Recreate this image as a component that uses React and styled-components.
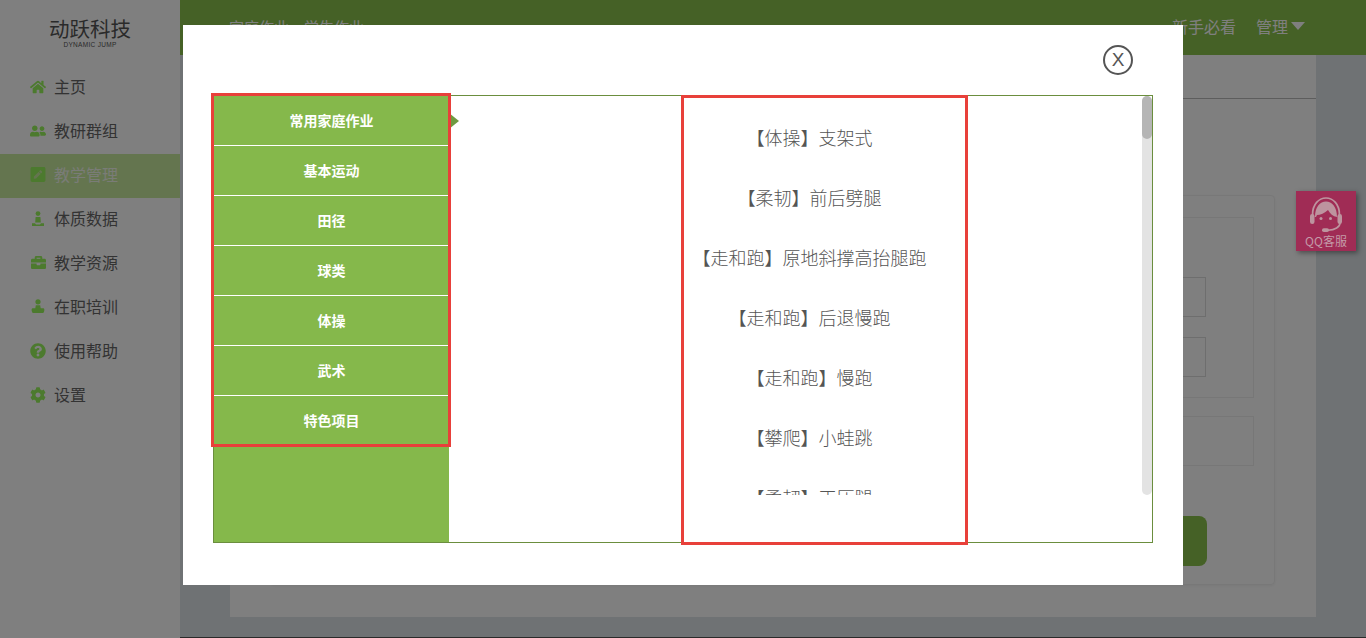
import React from "react";
import styled, { createGlobalStyle } from "styled-components";
import { FaHome, FaUserFriends, FaPenSquare, FaBriefcase, FaQuestionCircle, FaCog } from "react-icons/fa";

const CATEGORIES = ["常用家庭作业", "基本运动", "田径", "球类", "体操", "武术", "特色项目"];
const EXERCISES = [
    "【体操】支架式",
    "【柔韧】前后劈腿",
    "【走和跑】原地斜撑高抬腿跑",
    "【走和跑】后退慢跑",
    "【走和跑】慢跑",
    "【攀爬】小蛙跳",
    "【柔韧】正压腿",
];

function PodiumIcon () {
    return (
        <svg width="16" height="16" viewBox="0 0 16 16" fill="currentColor">
            <circle cx="8" cy="2.6" r="2.4" />
            <path d="M5.6 6h4.8l.4 5.4H5.2z" />
            <path d="M2 12.2h3l1 1.2h4l1-1.2h3V15H2z" />
        </svg>
    );
}

function TraineeIcon () {
    return (
        <svg width="16" height="16" viewBox="0 0 16 16" fill="currentColor">
            <circle cx="8" cy="2.8" r="2.6" />
            <path d="M5.8 6.2h4.4l.5 3h2.8c.8 0 1.2 1.6.6 3.2-.3.9-.9 1.6-1.7 1.6H3.6c-.8 0-1.4-.7-1.7-1.6-.6-1.6-.2-3.2.6-3.2h2.8z" />
        </svg>
    );
}

function HeadsetIcon () {
    return (
        <svg width="32" height="35" viewBox="0 0 32 35" fill="none">
            <path d="M2.5 18C2.5 7 9 1 16 1s13.5 6 13.5 17" stroke="#bd949f" strokeWidth="1.7" />
            <path d="M5 20C5 10 10 4.500 16 4.500S27 10 27 20c-4-.5-7-3.500-9-7-3 3-8 5-11 5l-1 2z" fill="#bd949f" />
            <rect x="0" y="17" width="4.500" height="10" rx="2.200" fill="#bd949f" />
            <rect x="27.500" y="17" width="4.500" height="10" rx="2.200" fill="#bd949f" />
            <circle cx="11" cy="21.500" r="1.500" fill="#bd949f" />
            <circle cx="20.500" cy="21.500" r="1.500" fill="#bd949f" />
            <path d="M30 26c0 4-5 7-12 7.300" stroke="#bd949f" strokeWidth="1.600" />
            <rect x="12" y="31.300" width="7" height="3.700" rx="1.800" fill="#bd949f" />
        </svg>
    );
}

const NAV_ITEMS = [
    { label: "主页", icon: <FaHome size={16} /> },
    { label: "教研群组", icon: <FaUserFriends size={16} /> },
    { label: "教学管理", icon: <FaPenSquare size={17} />, active: true },
    { label: "体质数据", icon: <PodiumIcon /> },
    { label: "教学资源", icon: <FaBriefcase size={15} /> },
    { label: "在职培训", icon: <TraineeIcon /> },
    { label: "使用帮助", icon: <FaQuestionCircle size={16} /> },
    { label: "设置", icon: <FaCog size={16} /> },
];

function App () {
    return (
        <Page>
            <GlobalStyle />
            <Sidebar>
                <Logo>
                    <LogoName>{"动跃科技"}</LogoName>
                    <LogoSub>{"DYNAMIC JUMP"}</LogoSub>
                </Logo>
                {NAV_ITEMS.map(item => (
                    <NavItem key={item.label} $active={item.active}>
                        <NavIcon>{item.icon}</NavIcon>
                        <NavLabel>{item.label}</NavLabel>
                    </NavItem>
                ))}
            </Sidebar>
            <Main>
                <TopBar>
                    <Crumb>{"家庭作业、学生作业"}</Crumb>
                    <TopLinks>
                        <span>{"新手必看"}</span>
                        <Manage>{"管理"}<Caret /></Manage>
                    </TopLinks>
                </TopBar>
                <Content>
                    <Panel>
                        <TabRow />
                        <Card>
                            <FieldBox>
                                <InputBox />
                                <InputBox />
                            </FieldBox>
                            <PlainBox />
                            <SubmitButton />
                        </Card>
                    </Panel>
                </Content>
                <BottomStrip />
            </Main>
            <Overlay>
                <Modal>
                    <ModalHead>
                        <CloseButton>{"X"}</CloseButton>
                    </ModalHead>
                    <Frame>
                        <Categories>
                            {CATEGORIES.map((name, i) => (
                                <CategoryRow key={name}>
                                    {name}
                                    {i === 0 && <ActiveArrow />}
                                </CategoryRow>
                            ))}
                        </Categories>
                        <ListPane>
                            <ExerciseList>
                                {EXERCISES.map(name => <Exercise key={name}>{name}</Exercise>)}
                            </ExerciseList>
                            <ScrollTrack><ScrollThumb /></ScrollTrack>
                        </ListPane>
                        <LeftMark />
                        <RightMark />
                    </Frame>
                </Modal>
            </Overlay>
            <QQButton>
                <HeadsetIcon />
                <QQLabel>{"QQ客服"}</QQLabel>
            </QQButton>
        </Page>
    );
}

const GlobalStyle = createGlobalStyle`
    html, body {
        margin: 0;
        padding: 0;
    }
    body {
        font-family: "Noto Sans CJK SC", "Liberation Sans", sans-serif;
    }
`;

const Page = styled.div`
    position: relative;
    display: flex;
    width: 1366px;
    height: 638px;
    overflow: hidden;
    background: #fff;
`;

const Sidebar = styled.div`
    width: 180px;
    flex-shrink: 0;
    background: #fff;
`;

const Logo = styled.div`
    height: 66px;
    display: flex;
    flex-direction: column;
    align-items: center;
    padding-top: 15px;
    box-sizing: border-box;
    color: #555;
`;

const LogoName = styled.div`
    font-size: 20.5px;
    line-height: 26px;
`;

const LogoSub = styled.div`
    font-family: "Liberation Sans", sans-serif;
    font-size: 6.5px;
    line-height: 7px;
    letter-spacing: 0.3px;
`;

const NavItem = styled.div`
    display: flex;
    align-items: center;
    height: 44px;
    padding-left: 30px;
    font-size: 16px;
    color: ${props => (props.$active ? "#f4f8ee" : "#666")};
    background: ${props => (props.$active ? "#c8ea9f" : "transparent")};
`;

const NavLabel = styled.span`
    padding-bottom: 5px;
`;

const NavIcon = styled.span`
    display: flex;
    justify-content: center;
    align-items: center;
    width: 16px;
    margin: -3px 8px 0 0;
    color: #98f45c;
`;

const Main = styled.div`
    flex: 1;
    display: flex;
    flex-direction: column;
    background: #dfe4e8;
`;

const TopBar = styled.div`
    height: 55px;
    flex-shrink: 0;
    box-sizing: border-box;
    display: flex;
    justify-content: space-between;
    align-items: center;
    padding: 0 61px 3px 49px;
    background: #8ac24c;
    color: #fff;
    font-size: 16px;
`;

const Crumb = styled.div`
    font-size: 15px;
`;

const TopLinks = styled.div`
    display: flex;
    gap: 20px;
`;

const Manage = styled.span`
    display: flex;
    align-items: center;
`;

const Caret = styled.i`
    width: 0;
    height: 0;
    margin: 0 0 0 3px;
    border-left: 7px solid transparent;
    border-right: 7px solid transparent;
    border-top: 8px solid #fff;
`;

const Content = styled.div`
    flex: 1;
    padding: 0 50px;
    min-height: 0;
`;

const Panel = styled.div`
    height: 562px;
    background: #fff;
`;

const TabRow = styled.div`
    height: 44px;
    box-sizing: border-box;
    border-bottom: 1px solid #bbb;
`;

const Card = styled.div`
    box-sizing: border-box;
    height: 390px;
    margin: 96px 41px 0 40px;
    padding: 21px 20px 0;
    border: 1px solid #f0f0f0;
    border-radius: 4px;
    display: flex;
    flex-direction: column;
    align-items: flex-end;
    box-shadow: 0 1px 3px rgba(0, 0, 0, 0.06);
`;

const FieldBox = styled.div`
    box-sizing: border-box;
    width: 100%;
    height: 181px;
    padding: 59px 47px 0 0;
    border: 1px solid #eee;
    display: flex;
    flex-direction: column;
    align-items: flex-end;
    gap: 20px;
`;

const InputBox = styled.div`
    box-sizing: border-box;
    width: 600px;
    height: 40px;
    border: 1px solid #ddd;
`;

const PlainBox = styled.div`
    box-sizing: border-box;
    width: 100%;
    height: 50px;
    margin-top: 18px;
    border: 1px solid #eee;
`;

const SubmitButton = styled.div`
    width: 190px;
    height: 50px;
    margin: 50px 47px 0 0;
    border-radius: 8px;
    background: #8ac24c;
`;

const BottomStrip = styled.div`
    height: 1px;
    flex-shrink: 0;
    background: #555;
`;

const QQButton = styled.div`
    position: absolute;
    left: 1296px;
    top: 191px;
    width: 60px;
    height: 60px;
    display: flex;
    flex-direction: column;
    align-items: center;
    padding-top: 6px;
    box-sizing: border-box;
    background: #a02c55;
    box-shadow: 2px 2px 5px rgba(0, 0, 0, 0.4);
`;

const QQLabel = styled.span`
    color: #c49aa8;
    font-size: 12px;
    line-height: 13px;
    margin-top: 2px;
`;

const Overlay = styled.div`
    position: absolute;
    inset: 0;
    display: flex;
    justify-content: center;
    align-items: flex-start;
    padding-top: 25px;
    background: rgba(0, 0, 0, 0.5);
`;

const Modal = styled.div`
    width: 1000px;
    height: 560px;
    padding: 0 30px;
    box-sizing: border-box;
    background: #fff;
`;

const ModalHead = styled.div`
    height: 70px;
    display: flex;
    justify-content: flex-end;
    align-items: center;
    padding: 0 20px 0 0;
`;

const CloseButton = styled.div`
    box-sizing: border-box;
    width: 30px;
    height: 30px;
    border: 2px solid #555;
    border-radius: 50%;
    display: flex;
    justify-content: center;
    align-items: center;
    font-family: "Liberation Sans", sans-serif;
    font-size: 19px;
    color: #555;
`;

const Frame = styled.div`
    position: relative;
    box-sizing: border-box;
    width: 940px;
    height: 448px;
    display: flex;
    border: 1px solid #6b8e3e;
`;

const Categories = styled.div`
    width: 235px;
    flex-shrink: 0;
    background: #85b84b;
`;

const CategoryRow = styled.div`
    position: relative;
    box-sizing: border-box;
    height: 50px;
    padding-bottom: 2px;
    display: flex;
    justify-content: center;
    align-items: center;
    border-bottom: 1px solid #fff;
    color: #fff;
    font-size: 14px;
    font-weight: 700;
`;

const ActiveArrow = styled.i`
    position: absolute;
    left: 100%;
    top: 17px;
    width: 0;
    height: 0;
    border-top: 8px solid transparent;
    border-bottom: 8px solid transparent;
    border-left: 10px solid #6f9a40;
`;

const ListPane = styled.div`
    flex: 1;
    display: flex;
    align-items: flex-start;
`;

const ExerciseList = styled.ul`
    flex: 1;
    height: 399px;
    margin: 0;
    padding: 11px 0 0 28px;
    box-sizing: border-box;
    overflow: hidden;
    list-style: none;
`;

const Exercise = styled.li`
    height: 60px;
    line-height: 60px;
    text-align: center;
    font-size: 18px;
    font-weight: 300;
    color: #555;
`;

const ScrollTrack = styled.div`
    width: 10px;
    height: 399px;
    border-radius: 5px;
    background: #e3e3e3;
`;

const ScrollThumb = styled.div`
    height: 43px;
    border-radius: 5px;
    background: #b5b5b5;
`;

const LeftMark = styled.div`
    position: absolute;
    left: -3px;
    top: -3px;
    width: 240px;
    height: 354px;
    box-sizing: border-box;
    border: 3px solid #e8403a;
`;

const RightMark = styled.div`
    position: absolute;
    left: 467px;
    top: -1px;
    width: 287px;
    height: 450px;
    box-sizing: border-box;
    border: 3px solid #e8403a;
`;

export default App;
